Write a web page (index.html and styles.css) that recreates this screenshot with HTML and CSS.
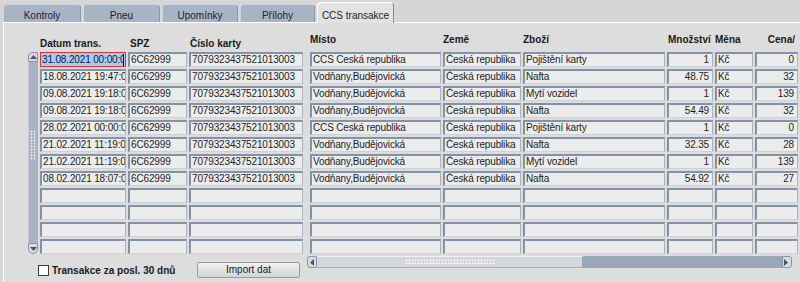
FILE: index.html
```html
<!DOCTYPE html>
<html lang="cs">
<head>
<meta charset="utf-8">
<title>CCS transakce</title>
<link rel="stylesheet" href="styles.css">
</head>
<body>
<div class="tabs">
  <div class="tab w1">Kontroly</div>
  <div class="tab w2">Pneu</div>
  <div class="tab w3">Upomínky</div>
  <div class="tab w4">Přílohy</div>
  <div class="tab active w5">CCS transakce</div>
</div>
<div class="panel">
  <div class="grid">
    <div></div>
    <div class="h f">Datum trans.</div>
    <div class="h f pl2">SPZ</div>
    <div class="h f pl1">Číslo karty</div>
    <div class="h s m">Místo</div>
    <div class="h s">Země</div>
    <div class="h s">Zboží</div>
    <div class="h s pl1">Množství</div>
    <div class="h s">Měna</div>
    <div class="h s right">Cena/</div>

    <div class="vsb">
      <div class="vbtn up"><svg width="7" height="4" viewBox="0 0 7 4"><path d="M0 4 L3.5 0 L7 4 Z" fill="#4c5564"/></svg></div>
      <div class="vtrack"><div class="grip-v"></div></div>
      <div class="vbtn down"><svg width="7" height="4" viewBox="0 0 7 4"><path d="M0 0 L3.5 4 L7 0 Z" fill="#4c5564"/></svg></div>
    </div>

    <div class="c sel"><span class="t">31.08.2021 00:00:00</span><span class="caret"></span></div>
    <div class="c">6C62999</div><div class="c">7079323437521013003</div>
    <div class="c m">CCS Ceská republika</div><div class="c">Česká republika</div><div class="c">Pojištění karty</div>
    <div class="c num">1</div><div class="c">Kč</div><div class="c num">0</div>

    <div class="c">18.08.2021 19:47:00</div>
    <div class="c">6C62999</div><div class="c">7079323437521013003</div>
    <div class="c m">Vodňany,Budějovická</div><div class="c">Česká republika</div><div class="c">Nafta</div>
    <div class="c num">48.75</div><div class="c">Kč</div><div class="c num">32</div>

    <div class="c">09.08.2021 19:18:00</div>
    <div class="c">6C62999</div><div class="c">7079323437521013003</div>
    <div class="c m">Vodňany,Budějovická</div><div class="c">Česká republika</div><div class="c">Mytí vozidel</div>
    <div class="c num">1</div><div class="c">Kč</div><div class="c num">139</div>

    <div class="c">09.08.2021 19:18:00</div>
    <div class="c">6C62999</div><div class="c">7079323437521013003</div>
    <div class="c m">Vodňany,Budějovická</div><div class="c">Česká republika</div><div class="c">Nafta</div>
    <div class="c num">54.49</div><div class="c">Kč</div><div class="c num">32</div>

    <div class="c">28.02.2021 00:00:00</div>
    <div class="c">6C62999</div><div class="c">7079323437521013003</div>
    <div class="c m">CCS Ceská republika</div><div class="c">Česká republika</div><div class="c">Pojištění karty</div>
    <div class="c num">1</div><div class="c">Kč</div><div class="c num">0</div>

    <div class="c">21.02.2021 11:19:00</div>
    <div class="c">6C62999</div><div class="c">7079323437521013003</div>
    <div class="c m">Vodňany,Budějovická</div><div class="c">Česká republika</div><div class="c">Nafta</div>
    <div class="c num">32.35</div><div class="c">Kč</div><div class="c num">28</div>

    <div class="c">21.02.2021 11:19:00</div>
    <div class="c">6C62999</div><div class="c">7079323437521013003</div>
    <div class="c m">Vodňany,Budějovická</div><div class="c">Česká republika</div><div class="c">Mytí vozidel</div>
    <div class="c num">1</div><div class="c">Kč</div><div class="c num">139</div>

    <div class="c">08.02.2021 18:07:00</div>
    <div class="c">6C62999</div><div class="c">7079323437521013003</div>
    <div class="c m">Vodňany,Budějovická</div><div class="c">Česká republika</div><div class="c">Nafta</div>
    <div class="c num">54.92</div><div class="c">Kč</div><div class="c num">27</div>

    <div class="c"></div><div class="c"></div><div class="c"></div><div class="c m"></div><div class="c"></div><div class="c"></div><div class="c"></div><div class="c"></div><div class="c"></div>
    <div class="c"></div><div class="c"></div><div class="c"></div><div class="c m"></div><div class="c"></div><div class="c"></div><div class="c"></div><div class="c"></div><div class="c"></div>
    <div class="c"></div><div class="c"></div><div class="c"></div><div class="c m"></div><div class="c"></div><div class="c"></div><div class="c"></div><div class="c"></div><div class="c"></div>
    <div class="c"></div><div class="c"></div><div class="c"></div><div class="c m"></div><div class="c"></div><div class="c"></div><div class="c"></div><div class="c"></div><div class="c"></div>

    <div class="bottom">
      <span class="check"></span>
      <span class="label">Transakce za posl. 30 dnů</span>
      <span class="button">Import dat</span>
    </div>

    <div class="hsb">
      <div class="hbtn left"><svg width="4" height="7" viewBox="0 0 4 7"><path d="M4 0 L0 3.5 L4 7 Z" fill="#4c5564"/></svg></div>
      <div class="hthumb"><div class="grip-h"></div></div>
      <div class="htrack"></div>
      <div class="hbtn right"><svg width="4" height="7" viewBox="0 0 4 7"><path d="M0 0 L4 3.5 L0 7 Z" fill="#4c5564"/></svg></div>
    </div>
  </div>
</div>
</body>
</html>
```
FILE: styles.css
```css
html, body {
  margin: 0;
  padding: 0;
}
body {
  width: 800px;
  height: 282px;
  overflow: hidden;
  background: #d6d6d6;
  font-family: "Liberation Sans", Arial, sans-serif;
  font-size: 10px;
  color: #1e1e1e;
}
.tabs {
  display: flex;
  align-items: flex-end;
  height: 22px;
  padding-left: 3px;
  gap: 2px;
}
.tab {
  box-sizing: border-box;
  height: 18px;
  padding-top: 4px;
  line-height: 13px;
  text-align: center;
  background: #a8b4c6;
  border-top: 1px solid #cdd4de;
  border-left: 1px solid #cdd4de;
  border-right: 1px solid #8b97ab;
  border-radius: 4px 4px 0 0;
  color: #1c2030;
}
.w1 { width: 78px; }
.w2 { width: 77px; }
.w3 { width: 76px; }
.w4 { width: 75px; }
.w5 { width: 77px; }
.tab.active {
  position: relative;
  z-index: 2;
  height: 21px;
  margin-bottom: -1px;
  padding-top: 6px;
  background: #e2e2e2;
  border-top: 1px solid #ffffff;
  border-left: 1px solid #ffffff;
  border-right: 1px solid #8c8c8c;
  color: #1c1c1c;
}
.panel {
  box-sizing: border-box;
  margin-left: 3px;
  height: 260px;
  background: #dddddd;
  border-top: 1px solid #ffffff;
  border-left: 1px solid #ffffff;
  padding: 10px 0 0 24px;
}
.grid {
  display: grid;
  grid-template-columns: 10px 86px 59px 114px 136px 78px 142px 46px 38px 43px;
  grid-template-rows: 17px repeat(12, 15px) 22px;
  column-gap: 2px;
  row-gap: 2px;
}
.h {
  font-weight: bold;
  line-height: 12px;
  white-space: nowrap;
  color: #1a1a1a;
}
.h.f { padding-top: 5px; }
.h.s { padding-top: 1px; }
.pl1 { padding-left: 1px; }
.pl2 { padding-left: 2px; }
.right { text-align: right; padding-right: 3px; }
.m { margin-left: 5px; }

.c {
  box-sizing: border-box;
  height: 15px;
  background: #ececec;
  border-top: 2px solid #8492a8;
  border-left: 2px solid #8492a8;
  border-right: 1px solid #aab2bf;
  border-bottom: 1px solid #cdd2d9;
  padding: 0 2px 0 1px;
  line-height: 12px;
  letter-spacing: -0.15px;
  white-space: nowrap;
  overflow: hidden;
}
.c.num {
  text-align: right;
  padding-right: 3px;
}
.c.sel {
  display: flex;
  border: 1px solid #e5322d;
  background: #a8cbf2;
  padding: 1px 0 0 1px;
  color: #10203a;
}
.sel .t {
  flex: 1;
  overflow: hidden;
}
.sel .caret {
  width: 1px;
  height: 12px;
  background: #000000;
  margin-right: 1px;
}

.vsb {
  grid-column: 1;
  grid-row: 2 / 14;
  display: flex;
  flex-direction: column;
}
.vbtn {
  box-sizing: border-box;
  height: 10px;
  display: flex;
  align-items: center;
  justify-content: center;
  background: #d6dbe2;
  border: 1px solid #8995a8;
}
.vbtn.up { border-radius: 4px 0 0 0; }
.vbtn.down { height: 11px; border-radius: 0 0 5px 5px; }
.vtrack {
  flex: 1;
  background: #a9b3c2;
  border-left: 1px solid #c6ccd6;
  padding-top: 68px;
}
.grip-v {
  width: 6px;
  height: 30px;
  margin-left: 1px;
  background-image: radial-gradient(circle, #eef0f4 0.8px, transparent 1.1px);
  background-size: 3px 3px;
}

.hsb {
  grid-column: 5 / 11;
  grid-row: 14;
  align-self: start;
  height: 12px;
  margin-left: 2px;
  margin-right: 6px;
  display: flex;
}
.hbtn {
  box-sizing: border-box;
  width: 10px;
  height: 12px;
  display: flex;
  align-items: center;
  justify-content: center;
  background: #d6dbe2;
  border: 1px solid #8995a8;
}
.hbtn.left { border-radius: 3px 0 0 3px; }
.hbtn.right { border-radius: 0 3px 3px 0; }
.hthumb {
  box-sizing: border-box;
  width: 266px;
  height: 12px;
  background: #d3d7dd;
  border-top: 1px solid #eef0f3;
  border-bottom: 1px solid #a9b1bd;
  border-right: 1px solid #9aa3b1;
  display: flex;
  justify-content: center;
  align-items: center;
}
.grip-h {
  width: 90px;
  height: 6px;
  background-image: radial-gradient(circle, #ffffff 0.8px, transparent 1.1px);
  background-size: 3px 3px;
}
.htrack {
  flex: 1;
  background: #9aa7bb;
}

.bottom {
  grid-column: 1 / 5;
  grid-row: 14;
  align-self: end;
  height: 16px;
  display: flex;
  align-items: center;
  padding-left: 10px;
  padding-right: 3px;
}
.check {
  box-sizing: border-box;
  width: 11px;
  height: 11px;
  background: #ffffff;
  border: 1px solid #3c3c3c;
  margin-right: 3px;
}
.label {
  font-weight: bold;
  white-space: nowrap;
  color: #1a1a1a;
}
.button {
  box-sizing: border-box;
  margin-left: auto;
  width: 103px;
  height: 16px;
  line-height: 14px;
  text-align: center;
  background: linear-gradient(#f2f2f2, #d4d4d4);
  border: 1px solid #9c9c9c;
  border-radius: 2px;
  color: #1a1a1a;
}
```
